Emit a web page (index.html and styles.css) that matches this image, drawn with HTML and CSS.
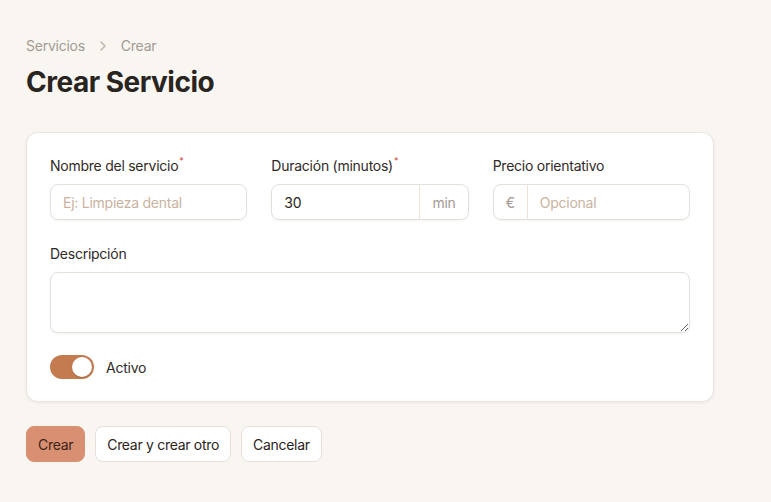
FILE: index.html
```html
<!DOCTYPE html>
<html lang="es">
  <head>
    <meta charset="UTF-8" />
    <meta name="viewport" content="width=device-width, initial-scale=1.0" />
    <title>Crear Servicio</title>
    <link rel="stylesheet" href="styles.css">
  </head>

  <body>
    <main class="page">
      <nav class="breadcrumb">
        <a href="#">Servicios</a>
        <svg class="crumb-sep" width="16" height="16" viewBox="0 0 16 16" fill="none">
          <path d="M6 4l4 4-4 4" stroke="currentColor" stroke-width="1.5" stroke-linecap="round" stroke-linejoin="round" />
        </svg>
        <span>Crear</span>
      </nav>
      <h1 class="page-title">Crear Servicio</h1>

      <form class="form-card">
        <div class="form-grid">
          <div class="field">
            <label for="nombre">Nombre del servicio<sup>*</sup></label>
            <div class="input-wrap">
              <input id="nombre" type="text" placeholder="Ej: Limpieza dental" />
            </div>
          </div>
          <div class="field">
            <label for="duracion">Duración (minutos)<sup>*</sup></label>
            <div class="input-wrap">
              <input id="duracion" type="text" value="30" />
              <span class="addon addon-right">min</span>
            </div>
          </div>
          <div class="field">
            <label for="precio">Precio orientativo</label>
            <div class="input-wrap">
              <span class="addon addon-left">€</span>
              <input id="precio" type="text" placeholder="Opcional" />
            </div>
          </div>
        </div>

        <div class="field field-full">
          <label for="descripcion">Descripción</label>
          <textarea id="descripcion"></textarea>
        </div>

        <label class="toggle-row">
          <span class="toggle"><span class="toggle-knob"></span></span>
          <span>Activo</span>
        </label>
      </form>

      <div class="actions">
        <button class="btn btn-primary">Crear</button>
        <button class="btn">Crear y crear otro</button>
        <button class="btn">Cancelar</button>
      </div>
    </main>
  </body>
</html>
```

FILE: styles.css
```css
body {
  margin: 0;
  padding: 0;
  background-color: #f9f6f2;
  font-family: Inter, "Noto Sans", sans-serif;
  color: #2b2622;
  letter-spacing: -0.25px;
}

.page {
  padding: 36px 26px 20px;
  width: 688px;
}

.breadcrumb {
  display: flex;
  align-items: center;
  gap: 8px;
  font-size: 14px;
  line-height: 20px;
  color: #a39a92;
}

.breadcrumb a {
  color: #a39a92;
  text-decoration: none;
}

.crumb-sep {
  color: #c0b6ad;
  margin: 0 2px;
}

.page-title {
  margin: 8px 0 32px;
  font-size: 28px;
  line-height: 36px;
  font-weight: 700;
  letter-spacing: -0.5px;
  color: #2a2420;
}

.form-card {
  background-color: #fff;
  border: 1px solid #ebe6e1;
  border-radius: 12px;
  box-shadow: 0 1px 3px rgba(60, 40, 20, 0.08);
  padding: 23px 23px 22px;
}

.form-grid {
  display: grid;
  grid-template-columns: repeat(3, minmax(0, 1fr));
  gap: 24px;
}

.field {
  display: flex;
  flex-direction: column;
  min-width: 0;
}

.field-full {
  margin-top: 24px;
}

.field label {
  font-size: 14px;
  line-height: 20px;
  color: #2f2a26;
  margin-bottom: 8px;
}

.field sup {
  color: #d4453a;
  font-size: 9px;
  line-height: 0;
  vertical-align: 7px;
  margin-left: 1px;
}

.input-wrap {
  display: flex;
  height: 36px;
  border: 1px solid #e6e0da;
  border-radius: 8px;
  box-shadow: 0 1px 2px rgba(60, 40, 20, 0.06);
  box-sizing: border-box;
  overflow: hidden;
}

.input-wrap input {
  flex: 1;
  width: 0;
  min-width: 0;
  border: none;
  outline: none;
  padding: 0 12px;
  font-family: inherit;
  font-size: 14px;
  letter-spacing: -0.25px;
  color: #2a2420;
  background: transparent;
}

.input-wrap input::placeholder,
textarea::placeholder {
  color: #c9b39f;
}

.addon {
  display: flex;
  align-items: center;
  font-size: 14px;
  color: #a39a92;
  padding: 0 12px;
}

.addon-right {
  border-left: 1px solid #ece2d8;
}

.addon-left {
  border-right: 1px solid #ece2d8;
}

textarea {
  height: 61px;
  box-sizing: border-box;
  border: 1px solid #e6e0da;
  border-radius: 8px;
  box-shadow: 0 1px 2px rgba(60, 40, 20, 0.06);
  font-family: inherit;
  font-size: 14px;
  padding: 8px 12px;
  resize: vertical;
  outline: none;
}

.toggle-row {
  display: flex;
  align-items: center;
  gap: 12px;
  margin-top: 22px;
  font-size: 14px;
  color: #2f2a26;
}

.toggle {
  display: flex;
  align-items: center;
  justify-content: flex-end;
  width: 44px;
  height: 24px;
  padding: 2px;
  box-sizing: border-box;
  border-radius: 12px;
  background-color: #c47b50;
}

.toggle-knob {
  width: 20px;
  height: 20px;
  border-radius: 50%;
  background-color: #fff;
  box-shadow: 0 1px 2px rgba(0, 0, 0, 0.15);
}

.actions {
  display: flex;
  gap: 10px;
  margin-top: 24px;
}

.btn {
  height: 36px;
  padding: 0 11px;
  font-family: inherit;
  font-size: 14px;
  letter-spacing: -0.3px;
  color: #2a2420;
  background-color: #fff;
  border: 1px solid #e6e0da;
  border-radius: 8px;
  cursor: pointer;
}

.btn-primary {
  background-color: #d98f72;
  border-color: #d98f72;
  color: #3a2418;
}

.btn-primary:hover {
  background-color: #cf8264;
}
```
